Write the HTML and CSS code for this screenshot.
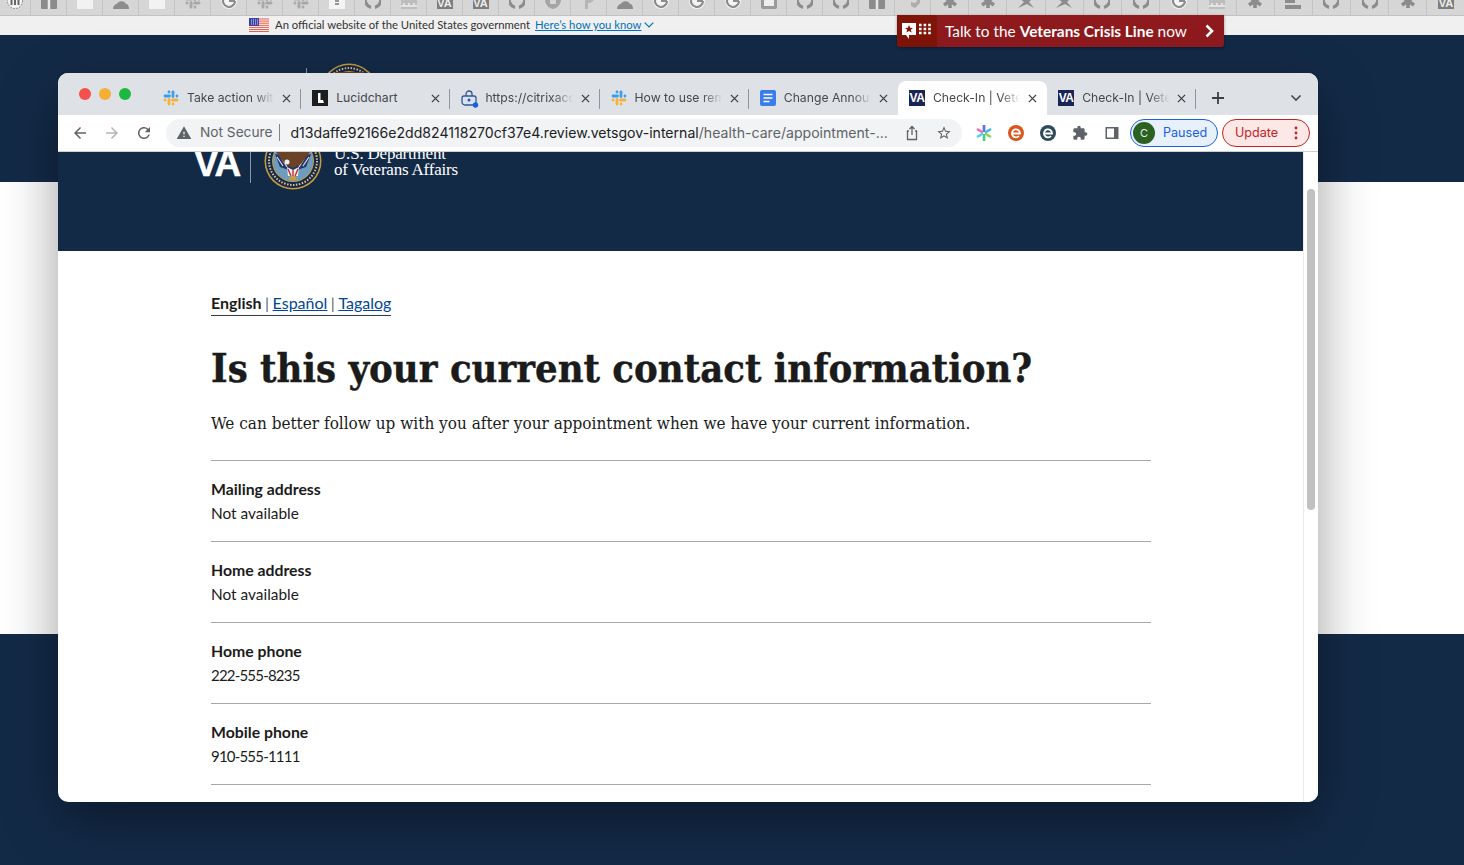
FILE: index.html
```html
<!DOCTYPE html>
<html lang="en">
<head>
<meta charset="UTF-8">
<meta name="viewport" content="width=device-width, initial-scale=1.0">
<title>Check-In | Veterans Affairs</title>
<link rel="stylesheet" href="styles.css">
</head>

<body>
<svg class="defs" width="0" height="0">
    <symbol id="b-gh" viewBox="0 0 16 16"><path d="M2.500 2a7.500 7.500 0 0 0 3.500 12.500M13.500 2a7.500 7.500 0 0 1-3.500 12.500" fill="none" stroke="currentColor" stroke-width="3"/></symbol>
    <symbol id="b-g" viewBox="0 0 16 16"><circle cx="8" cy="8" r="8" fill="#f4f4f4"/><path d="M14 8a6 6 0 1 1-2-4.500M8 8h6" fill="none" stroke="currentColor" stroke-width="2.200"/></symbol>
    <symbol id="b-slack" viewBox="0 0 16 16">
        <path d="M2 6h4.500M6 2h.01M10 2v4.500M14 6h.01M14 10H9.500M10 14h.01M6 14V9.500M2 10h.01" stroke="#a9a9a9" stroke-width="3" stroke-linecap="round"/>
    </symbol>
    <symbol id="b-star" viewBox="0 0 16 16"><path d="M8 1v14M2 4l12 8M14 4L2 12" stroke="currentColor" stroke-width="3.600"/></symbol>
    <symbol id="b-t" viewBox="0 0 16 16"><rect width="16" height="16" rx="1" fill="currentColor"/><path d="M8 7v9" stroke="#e8e8e8" stroke-width="2.500"/></symbol>
    <symbol id="b-sq" viewBox="0 0 16 16"><rect width="16" height="16" fill="#f2f2f2"/></symbol>
    <symbol id="b-cloud" viewBox="0 0 16 16"><path d="M0 16c0-3 2-5 4-5 1-3 7-4 9 0 2 0 3 2 3 5z" fill="currentColor"/></symbol>
    <symbol id="b-doc" viewBox="0 0 16 16"><rect width="16" height="16" fill="#f4f4f4"/><path d="M6 5h4M6 8h4M6 11h4" stroke="#777" stroke-width="1.600"/></symbol>
    <symbol id="b-dots" viewBox="0 0 16 16"><circle cx="8" cy="8" r="7.500" fill="#f4f4f4" stroke="#777" stroke-dasharray="1.500 1.500"/><path d="M4.500 5v7M8 5v7M11.500 5v7" stroke="#666" stroke-width="2"/></symbol>
    <symbol id="b-img" viewBox="0 0 16 16"><rect width="16" height="16" fill="#bdbdbd"/><path d="M0 13h16M3 10v3M8 10v3M13 10v3" stroke="#eee" stroke-width="1.400"/></symbol>
    <symbol id="b-shield" viewBox="0 0 16 16"><path d="M0 6h5v5h6V6h5c0 5-3 9-8 10C3 15 0 11 0 6z" fill="#a5a5a5"/></symbol>
    <symbol id="b-p" viewBox="0 0 16 16"><path d="M4 16V0h4a4 4 0 0 1 0 10H7v6z" fill="#b5b5b5"/></symbol>
    <symbol id="b-cal" viewBox="0 0 16 16"><rect width="16" height="16" rx="2" fill="#9a9a9a"/><rect x="3" y="5" width="10" height="8" fill="#eee"/></symbol>
    <symbol id="b-hex" viewBox="0 0 16 16"><path d="M1 1l5 3v9l4 2 5-5V2l-3-1v7l-2 2-4-1V3z" fill="#adadad"/></symbol>
    <symbol id="b-bird" viewBox="0 0 16 16"><path d="M0 15l6-6-5-4 7 2 7-2-4 4 5 6-7-4z" fill="currentColor"/></symbol>
    <symbol id="b-bars" viewBox="0 0 16 16"><path d="M0 6h10v4H0zM0 12h16v4H0z" fill="currentColor"/></symbol>

    <symbol id="slack" viewBox="0 0 16 16">
        <path d="M2 6h4.500M6 2h.01M10 2v4.500M14 6h.01" stroke="#3b9df0" stroke-width="2.800" stroke-linecap="round"/>
        <path d="M14 10H9.500M10 14h.01M6 14V9.500M2 10h.01" stroke="#f5b13d" stroke-width="2.800" stroke-linecap="round"/>
    </symbol>
    <symbol id="close" viewBox="0 0 10 10"><path d="M1 1l8 8M9 1l-8 8" stroke="#3c4043" stroke-width="1.400"/></symbol>

    <symbol id="seal" viewBox="0 0 58 58">
        <circle cx="29" cy="29" r="28.500" fill="#c69c3f"/>
        <circle cx="29" cy="29" r="27" fill="#17294a"/>
        <circle cx="29" cy="29" r="24" fill="none" stroke="#d8c48a" stroke-width="2" stroke-dasharray="1.500 1.500"/>
        <circle cx="29" cy="29" r="21" fill="#c69c3f"/>
        <circle cx="29" cy="29" r="20" fill="#6d9cbf"/>
        <path d="M11 22l16 3 2 8 2-8 16-3-5 13-9 3-4 7-4-7-9-3z" fill="#243465"/>
        <path d="M13 25l6 9M18 27l5 8M45 25l-6 9M40 27l-5 8" stroke="#d9dde6" stroke-width="1.200"/>
        <path d="M15 9h28l3 11-9 12-8 4-8-4-9-12z" fill="#6b4225"/>
        <circle cx="23" cy="30" r="2.500" fill="#eee"/>
        <path d="M23 35l6 3 6-3-1 9h-10z" fill="#eee"/>
        <path d="M24 37l3 7M29 38v6M34 37l-3 7" stroke="#b5302c" stroke-width="1.400"/>
        <path d="M27 44h4l2 4h-8z" fill="#c69c3f"/>
    </symbol>
</svg>

<div class="desk">
    <div class="bookmarks">
        <span class="mark first"><svg><use href="#b-dots"/></svg></span>
        <span class="mark"><svg><use href="#b-t"/></svg></span>
        <span class="mark"><svg><use href="#b-sq"/></svg></span>
        <span class="mark"><svg><use href="#b-cloud"/></svg></span>
        <span class="mark"><svg><use href="#b-sq"/></svg></span>
        <span class="mark"><svg><use href="#b-slack"/></svg></span>
        <span class="mark"><svg><use href="#b-g"/></svg></span>
        <span class="mark"><svg><use href="#b-slack"/></svg></span>
        <span class="mark"><svg><use href="#b-slack"/></svg></span>
        <span class="mark"><svg><use href="#b-doc"/></svg></span>
        <span class="mark"><svg><use href="#b-gh"/></svg></span>
        <span class="mark"><svg><use href="#b-img"/></svg></span>
        <span class="mark"><span class="mark-va">VA</span></span>
        <span class="mark"><span class="mark-va">VA</span></span>
        <span class="mark"><svg><use href="#b-gh"/></svg></span>
        <span class="mark"><svg><use href="#b-shield"/></svg></span>
        <span class="mark"><svg><use href="#b-p"/></svg></span>
        <span class="mark"><svg><use href="#b-cloud"/></svg></span>
        <span class="mark"><svg><use href="#b-g"/></svg></span>
        <span class="mark"><svg><use href="#b-g"/></svg></span>
        <span class="mark"><svg><use href="#b-g"/></svg></span>
        <span class="mark"><svg><use href="#b-cal"/></svg></span>
        <span class="mark"><svg><use href="#b-gh"/></svg></span>
        <span class="mark"><svg><use href="#b-gh"/></svg></span>
        <span class="mark"><svg><use href="#b-t"/></svg></span>
        <span class="mark"><svg><use href="#b-hex"/></svg></span>
        <span class="mark wide"><svg><use href="#b-star"/></svg></span>
        <span class="mark wide"><svg><use href="#b-star"/></svg></span>
        <span class="mark wide"><svg><use href="#b-bird"/></svg></span>
        <span class="mark wide"><svg><use href="#b-bird"/></svg></span>
        <span class="mark wide"><svg><use href="#b-gh"/></svg></span>
        <span class="mark wide"><svg><use href="#b-gh"/></svg></span>
        <span class="mark wide"><svg><use href="#b-g"/></svg></span>
        <span class="mark wide"><svg><use href="#b-img"/></svg></span>
        <span class="mark wide"><svg><use href="#b-star"/></svg></span>
        <span class="mark wide"><svg><use href="#b-bars"/></svg></span>
        <span class="mark wide"><svg><use href="#b-gh"/></svg></span>
        <span class="mark wide"><svg><use href="#b-gh"/></svg></span>
        <span class="mark wide"><svg><use href="#b-star"/></svg></span>
        <span class="mark wide"><span class="mark-va">VA</span></span>
    </div>

    <div class="gov-banner">
        <svg class="flag" viewBox="0 0 20 14">
            <rect width="20" height="14" fill="#f6f0ee"/>
            <path d="M0 1h20M0 3.100h20M0 5.200h20M0 7.300h20M0 9.400h20M0 11.500h20M0 13.500h20" stroke="#e2604f" stroke-width="1"/>
            <rect width="10" height="8" fill="#3a3fa0"/>
            <path d="M2 2h7M2 4h7M2 6h7" stroke="#dfe0f5" stroke-width="1" stroke-dasharray="1 1"/>
        </svg>
        <span>An official website of the United States government</span>
        <a class="know-link" href="#">Here’s how you know</a>
        <svg class="know-chevron" viewBox="0 0 10 6"><path d="M.7.7L5 5l4.300-4.300" fill="none" stroke="#0071bb" stroke-width="1.200"/></svg>
    </div>
    <div class="band-navy band-top"></div>
    <div class="band-white"></div>
    <div class="band-navy band-bottom"></div>
</div>

<a class="crisis" href="#">
    <span class="crisis-icon">
        <svg viewBox="0 0 30 18" width="30" height="18">
            <path d="M0 1h14v12H7v4l-3-4H0z" fill="#fff"/>
            <path d="M7 3l1.200 2.700 2.800.2-2.200 1.800.8 2.800L7 8.900l-2.600 1.600.8-2.800L3 5.900l2.800-.2z" fill="#7f1409"/>
            <path d="M17 3h12M17 7h12M17 11h12" stroke="#fff" stroke-width="2.600" stroke-dasharray="2.600 2"/>
        </svg>
    </span>
    <span class="crisis-text">Talk to the <b>Veterans Crisis Line</b> now</span>
    <svg class="crisis-arrow" viewBox="0 0 9 14" width="9" height="14"><path d="M1.500 1.500L7 7l-5.500 5.500" fill="none" stroke="#fff" stroke-width="2.600"/></svg>
</a>

<span class="behind-line"></span>
<svg class="behind-seal"><use href="#seal"/></svg>

<div class="window">
    <div class="tabstrip">
        <div class="lights">
            <span class="light red"></span>
            <span class="light amber"></span>
            <span class="light green"></span>
        </div>
        <div class="tab sep">
            <svg class="fav"><use href="#slack"/></svg>
            <span class="tab-title">Take action wit</span>
            <svg class="tab-close"><use href="#close"/></svg>
        </div>
        <div class="tab sep">
            <svg class="fav" viewBox="0 0 16 16"><rect width="16" height="16" fill="#1d1d1f"/><path d="M6 3v10h6l-1-3H8.500V3z" fill="#fff"/></svg>
            <span class="tab-title no-fade">Lucidchart</span>
            <svg class="tab-close"><use href="#close"/></svg>
        </div>
        <div class="tab sep">
            <svg class="fav fav-over" viewBox="0 0 16 16">
                <path d="M3 6h10a2 2 0 0 1 2 2v4a3 3 0 0 1-3 3H4a3 3 0 0 1-3-3V8a2 2 0 0 1 2-2z" fill="#d7e1f7" stroke="#35568f" stroke-width="1.300"/>
                <path d="M5 6V4a3 3 0 0 1 6 0v2" fill="none" stroke="#35568f" stroke-width="1.300"/>
                <circle cx="8" cy="10" r="1.500" fill="#35568f"/>
                <circle cx="14.500" cy="15" r="2.700" fill="#1a62dc"/>
            </svg>
            <span class="tab-title">https://citrixacc</span>
            <svg class="tab-close"><use href="#close"/></svg>
        </div>
        <div class="tab sep">
            <svg class="fav"><use href="#slack"/></svg>
            <span class="tab-title">How to use rem</span>
            <svg class="tab-close"><use href="#close"/></svg>
        </div>
        <div class="tab">
            <svg class="fav" viewBox="0 0 16 16"><rect width="16" height="16" rx="2" fill="#3b7de8"/><path d="M3.500 4.500h9M3.500 8h9M3.500 11.500h6" stroke="#fff" stroke-width="1.500"/></svg>
            <span class="tab-title">Change Annou</span>
            <svg class="tab-close"><use href="#close"/></svg>
        </div>
        <div class="tab active">
            <span class="fav fav-va">VA</span>
            <span class="tab-title">Check-In | Vete</span>
            <svg class="tab-close"><use href="#close"/></svg>
        </div>
        <div class="tab sep">
            <span class="fav fav-va">VA</span>
            <span class="tab-title">Check-In | Vete</span>
            <svg class="tab-close"><use href="#close"/></svg>
        </div>
        <svg class="new-tab" viewBox="0 0 14 14"><path d="M7 1v12M1 7h12" stroke="#3c4043" stroke-width="1.800"/></svg>
        <svg class="tab-menu" viewBox="0 0 12 8"><path d="M1.500 1.500L6 6l4.500-4.500" fill="none" stroke="#45484c" stroke-width="1.600"/></svg>
    </div>

    <div class="toolbar">
        <svg class="tool" viewBox="0 0 24 24"><path fill="#5f6368" d="M20 11H7.830l5.590-5.590L12 4l-8 8 8 8 1.410-1.410L7.830 13H20v-2z"/></svg>
        <svg class="tool" viewBox="0 0 24 24"><path fill="#b4b6b9" d="M4 11h12.170l-5.590-5.590L12 4l8 8-8 8-1.410-1.410L16.170 13H4v-2z"/></svg>
        <svg class="tool" viewBox="0 0 24 24"><path fill="#5f6368" d="M17.650 6.350A7.958 7.958 0 0 0 12 4c-4.420 0-7.990 3.580-7.990 8s3.570 8 7.990 8c3.730 0 6.840-2.550 7.730-6h-2.080A5.990 5.990 0 0 1 12 18c-3.310 0-6-2.690-6-6s2.690-6 6-6c1.660 0 3.140.690 4.220 1.780L13 11h7V4l-2.350 2.350z"/></svg>
        <div class="omnibox">
            <svg class="warn" viewBox="0 0 24 24"><path fill="#5f6368" d="M1 21h22L12 2 1 21zm12-3h-2v-2h2v2zm0-4h-2v-4h2v4z"/></svg>
            <span class="not-secure">Not Secure</span>
            <span class="url"><span class="url-host">d13daffe92166e2dd824118270cf37e4.review.vetsgov-internal</span>/health-care/appointment-...</span>
            <svg class="omni-icon" viewBox="0 0 16 16"><path d="M5 6H3.500v8.500h9V6H11M8 10V1.500M5.500 4L8 1.500 10.500 4" fill="none" stroke="#5f6368" stroke-width="1.300"/></svg>
            <svg class="omni-icon" viewBox="0 0 24 24"><path fill="#5f6368" d="M22 9.240l-7.190-.620L12 2 9.190 8.630 2 9.240l5.460 4.730L5.820 21 12 17.270 18.180 21l-1.630-7.030L22 9.240zM12 15.400l-3.760 2.270 1-4.280-3.320-2.880 4.380-.380L12 6.100l1.710 4.040 4.380.380-3.320 2.880 1 4.280L12 15.400z"/></svg>
        </div>
        <div class="extensions">
            <svg class="ext" viewBox="0 0 16 16">
                <path d="M8 0v7" stroke="#5b6de8" stroke-width="2.600"/><path d="M8 9v7" stroke="#3ecf8e" stroke-width="2.600"/>
                <path d="M1 4l6 3.500" stroke="#f06ab0" stroke-width="2.600"/><path d="M15 4L9 7.500" stroke="#35b6f2" stroke-width="2.600"/>
                <path d="M1 12l6-3.500" stroke="#4fd0f0" stroke-width="2.600"/><path d="M15 12L9 8.500" stroke="#8bd450" stroke-width="2.600"/>
            </svg>
            <svg class="ext" viewBox="0 0 16 16"><circle cx="8" cy="8" r="8" fill="#d9571f"/><path d="M3.500 8.500h8.500A4 4 0 1 0 11 11" fill="none" stroke="#fff" stroke-width="1.800"/></svg>
            <svg class="ext" viewBox="0 0 16 16"><circle cx="8" cy="8" r="8" fill="#2f4a5c"/><path d="M4 8.500h8A4 4 0 1 0 11 11" fill="none" stroke="#fff" stroke-width="1.800"/></svg>
            <svg class="ext" viewBox="0 0 24 24"><path fill="#5f6368" d="M20.500 11H19V7c0-1.100-.9-2-2-2h-4V3.500C13 2.120 11.880 1 10.500 1S8 2.120 8 3.500V5H4c-1.100 0-1.990.9-1.990 2v3.800H3.500c1.490 0 2.700 1.210 2.700 2.700s-1.210 2.700-2.700 2.700H2V20c0 1.100.9 2 2 2h3.800v-1.500c0-1.490 1.210-2.700 2.700-2.700 1.490 0 2.700 1.210 2.700 2.700V22H17c1.100 0 2-.9 2-2v-4h1.500c1.380 0 2.500-1.120 2.500-2.500S21.880 11 20.500 11z"/></svg>
            <svg class="ext" viewBox="0 0 16 16"><rect x="1.500" y="2" width="13" height="12" fill="#5f6368"/><rect x="3" y="3.500" width="7" height="9" fill="#fff"/></svg>
        </div>
        <div class="pill paused">
            <span class="avatar">C</span>
            <span>Paused</span>
        </div>
        <div class="pill update">
            <span>Update</span>
            <svg class="kebab" viewBox="0 0 4 14"><circle cx="2" cy="2" r="1.400"/><circle cx="2" cy="7" r="1.400"/><circle cx="2" cy="12" r="1.400"/></svg>
        </div>
    </div>

    <div class="viewport">
        <div class="page">
            <header class="va-header">
                <span class="va-logo">VA</span>
                <span class="va-divider"></span>
                <svg class="va-seal"><use href="#seal"/></svg>
                <span class="va-name">U.S. Department<br>of Veterans Affairs</span>
            </header>
            <main class="content">
                <div class="langs">
                    <strong>English</strong><span class="pipe">|</span><a href="#">Español</a><span class="pipe">|</span><a href="#">Tagalog</a>
                </div>
                <h1>Is this your current contact information?</h1>
                <p class="intro">We can better follow up with you after your appointment when we have your current information.</p>
                <dl class="details">
                    <div class="detail"><dt>Mailing address</dt><dd>Not available</dd></div>
                    <div class="detail"><dt>Home address</dt><dd>Not available</dd></div>
                    <div class="detail"><dt>Home phone</dt><dd class="phone">222-555-8235</dd></div>
                    <div class="detail"><dt>Mobile phone</dt><dd class="phone">910-555-1111</dd></div>
                    <div class="detail"></div>
                </dl>
            </main>
        </div>
        <div class="scrollbar"><span class="thumb"></span></div>
    </div>
</div>

</body>
</html>
```

FILE: styles.css
```css
* {
    box-sizing: border-box;
}
html, body {
    margin: 0;
    height: 865px;
    overflow: hidden;
}
body {
    font-family: "Lato", "Noto Sans", sans-serif;
    color: #1b1b1b;
    position: relative;
}
.defs {
    position: absolute;
}

/* page behind the window */
.desk {
    height: 865px;
    display: flex;
    flex-direction: column;
}
.bookmarks {
    height: 16px;
    flex: none;
    display: flex;
    background: #d6d6d6;
    border-bottom: 1px solid #c2c2c2;
    overflow: hidden;
    color: #8c8c8c;
}
.mark {
    width: 36px;
    flex: none;
    display: flex;
    justify-content: center;
    align-items: flex-end;
    border-right: 1px solid #c4c4c4;
}
.mark.first {
    width: 31px;
}
.mark.wide {
    width: 38.2px;
}
.mark svg {
    width: 16px;
    height: 16px;
    flex: none;
    margin-bottom: 6px;
}
.mark-va {
    width: 16px;
    height: 16px;
    flex: none;
    margin-bottom: 6px;
    background: #7d7d7d;
    color: #eee;
    font-family: "Liberation Sans", sans-serif;
    font-weight: 700;
    font-size: 11px;
    line-height: 20px;
    text-align: center;
}
.gov-banner {
    height: 19px;
    flex: none;
    background: #f0f0f0;
    padding: 0 0 2px 249px;
    display: flex;
    align-items: center;
    font-size: 11.3px;
    color: #333;
}
.flag {
    width: 20px;
    height: 14px;
    margin: 1px 6px 0 0;
}
.know-link {
    color: #0071bb;
    margin-left: 5px;
}
.know-chevron {
    width: 10px;
    height: 6px;
    margin-left: 3px;
}
.band-navy {
    background: #132a47;
}
.band-top {
    height: 147px;
    flex: none;
}
.band-white {
    height: 452px;
    flex: none;
    background: #fff;
}
.band-bottom {
    flex: 1;
}

.crisis {
    position: absolute;
    left: 897px;
    top: 15px;
    width: 327px;
    height: 32px;
    display: flex;
    align-items: center;
    background: #8e1a1e;
    border-radius: 0 0 3px 3px;
    box-shadow: 0 1px 3px rgba(0, 0, 0, .4);
    color: #fff;
    text-decoration: none;
    font-size: 15.4px;
}
.crisis-icon {
    width: 40px;
    height: 32px;
    flex: none;
    display: flex;
    align-items: center;
    justify-content: center;
    background: #7f1409;
    border-radius: 0 0 0 3px;
}
.crisis-text {
    margin-left: 8px;
    flex: 1;
}
.crisis-arrow {
    margin-right: 10px;
}
.behind-seal {
    position: absolute;
    left: 320px;
    top: 63px;
    width: 58px;
    height: 58px;
}
.behind-line {
    position: absolute;
    left: 306px;
    top: 68px;
    width: 1px;
    height: 6px;
    background: #8b96a8;
}

/* browser window */
.window {
    position: absolute;
    left: 58px;
    top: 73px;
    width: 1260px;
    height: 729px;
    display: flex;
    flex-direction: column;
    border-radius: 10px;
    overflow: hidden;
    box-shadow: 0 18px 55px rgba(0, 0, 0, .38);
    background: #fff;
    font-family: "Inter", "Liberation Sans", sans-serif;
}
.tabstrip {
    height: 42px;
    flex: none;
    display: flex;
    align-items: flex-end;
    background: #dee1e6;
    padding-left: 94px;
    position: relative;
}
.lights {
    position: absolute;
    left: 21px;
    top: 15px;
    display: flex;
    gap: 8px;
}
.light {
    width: 12px;
    height: 12px;
    border-radius: 50%;
}
.light.red {
    background: #f4504c;
}
.light.amber {
    background: #f6ae35;
}
.light.green {
    background: #1bb93f;
}
.tab {
    width: 149.2px;
    height: 34px;
    flex: none;
    display: flex;
    align-items: center;
    padding: 0 10px 0 11px;
    position: relative;
    font-size: 12.2px;
    color: #45484c;
}
.tab.sep::after {
    content: "";
    position: absolute;
    right: 0;
    top: 8px;
    height: 20px;
    width: 1px;
    background: #92969c;
}
.tab.active {
    background: #fff;
    border-radius: 8px 8px 0 0;
}
.fav {
    width: 16px;
    height: 16px;
    flex: none;
    margin-right: 8px;
}
.fav-over {
    overflow: visible;
}
.fav-va {
    background: #1a2556;
    color: #fff;
    font-family: "Liberation Sans", sans-serif;
    font-weight: 700;
    font-size: 12px;
    letter-spacing: -.5px;
    line-height: 17px;
    text-align: center;
}
.tab-title {
    flex: 1;
    white-space: nowrap;
    overflow: hidden;
    margin: 0 6px 2px 0;
    -webkit-mask-image: linear-gradient(90deg, #000 76%, transparent 98%);
    mask-image: linear-gradient(90deg, #000 76%, transparent 98%);
}
.tab-title.no-fade {
    -webkit-mask-image: none;
    mask-image: none;
}
.tab-close {
    width: 9px;
    height: 9px;
    flex: none;
}
.new-tab {
    width: 14px;
    height: 14px;
    margin: 0 0 10px 15px;
}
.tab-menu {
    width: 12px;
    height: 8px;
    margin: 0 0 13px 65px;
}

.toolbar {
    height: 37px;
    flex: none;
    display: flex;
    align-items: center;
    background: #fff;
    border-bottom: 1px solid #cfcfcf;
    padding: 0 8px 1px 13px;
}
.tool {
    width: 18px;
    height: 18px;
    flex: none;
    margin-right: 14px;
}
.omnibox {
    width: 796px;
    height: 28px;
    flex: none;
    margin-left: -1px;
    display: flex;
    align-items: center;
    background: #f1f3f4;
    border-radius: 14px;
    padding: 0 10px 0 10px;
    font-size: 14.1px;
    white-space: nowrap;
}
.warn {
    width: 16px;
    height: 16px;
    flex: none;
    margin-right: 8px;
}
.not-secure {
    color: #5f6368;
    font-size: 13.7px;
    padding-right: 7px;
    margin-right: 10px;
    border-right: 1px solid #80868b;
    line-height: 17px;
}
.url {
    color: #5f6368;
    flex: 1;
    overflow: hidden;
}
.url-host {
    color: #202124;
}
.omni-icon {
    width: 16px;
    height: 16px;
    flex: none;
    margin-left: 16px;
}
.extensions {
    display: flex;
    gap: 16px;
    margin-left: 14px;
}
.ext {
    width: 16px;
    height: 16px;
}
.pill {
    width: 88px;
    height: 28px;
    flex: none;
    display: flex;
    align-items: center;
    border-radius: 14px;
    font-size: 12.6px;
    line-height: 18px;
}
.paused {
    margin-left: 10px;
    background: #e8f0fc;
    border: 1px solid #1a62dc;
    color: #1a62dc;
    padding-left: 2px;
    gap: 8px;
}
.avatar {
    width: 22px;
    height: 22px;
    flex: none;
    border-radius: 50%;
    background: #2b6221;
    color: #e6efe4;
    font-size: 11px;
    display: flex;
    align-items: center;
    justify-content: center;
}
.update {
    margin-left: 4px;
    background: #fce8e6;
    border: 1px solid #c5221f;
    color: #c5221f;
    padding: 1px 11px 0 12px;
    justify-content: space-between;
}
.paused > span:last-child {
    padding-top: 1px;
}
.kebab {
    width: 4px;
    height: 14px;
    fill: #c5221f;
}

/* page inside the window */
.viewport {
    flex: 1;
    display: flex;
    min-height: 0;
}
.page {
    flex: 1;
    min-width: 0;
    overflow: hidden;
    font-family: "Lato", "Noto Sans", sans-serif;
}
.scrollbar {
    width: 15px;
    flex: none;
    background: #fff;
    border-left: 1px solid #ebebeb;
    padding: 37px 3px 0 3px;
}
.thumb {
    display: block;
    height: 321px;
    background: #c1c1c1;
    border-radius: 4px;
}
.va-header {
    height: 99px;
    background: #132a47;
    color: #fff;
    display: flex;
    align-items: flex-start;
    padding-left: 136px;
}
.va-logo {
    font-family: "Liberation Sans", sans-serif;
    font-weight: 700;
    font-size: 37px;
    line-height: 27px;
    width: 56px;
    flex: none;
    letter-spacing: -1.5px;
    margin-top: -2px;
    -webkit-text-stroke: .5px #fff;
}
.va-divider {
    width: 1px;
    height: 31px;
    background: #8b96a8;
    flex: none;
}
.va-seal {
    width: 58px;
    height: 58px;
    flex: none;
    margin: -20px 0 0 13px;
}
.va-name {
    font-family: "Liberation Serif", serif;
    font-size: 17px;
    line-height: 16px;
    margin: -6px 0 0 12px;
    letter-spacing: -.2px;
}
.content {
    width: 1093px;
    padding: 42px 0 0 153px;
}
.langs {
    display: inline-flex;
    height: 23px;
    align-items: center;
    border-bottom: 1px solid #323a45;
    font-size: 16px;
    padding-bottom: 3px;
}
.langs a {
    color: #004795;
}
.pipe {
    margin: 0 3.5px;
    color: #5b616b;
}
h1 {
    margin: 27px 0 0;
    font-family: "DejaVu Serif Condensed", "DejaVu Serif", serif;
    font-weight: 700;
    font-size: 39.6px;
    line-height: 50px;
    white-space: nowrap;
    -webkit-text-stroke: .4px #1b1b1b;
}
.intro {
    margin: 17px 0 24px;
    font-family: "DejaVu Serif Condensed", "DejaVu Serif", serif;
    font-size: 17px;
    line-height: 26px;
    white-space: nowrap;
}
.details {
    margin: 0;
}
.detail {
    height: 81px;
    border-top: 1px solid #a5a9ad;
    padding-top: 16px;
}
.detail dt {
    font-weight: 700;
    font-size: 15.8px;
    line-height: 24px;
}
.detail dd {
    margin: 0;
    font-size: 15.4px;
    line-height: 24px;
}
.detail dd.phone {
    font-size: 15px;
    letter-spacing: -.8px;
}
```
